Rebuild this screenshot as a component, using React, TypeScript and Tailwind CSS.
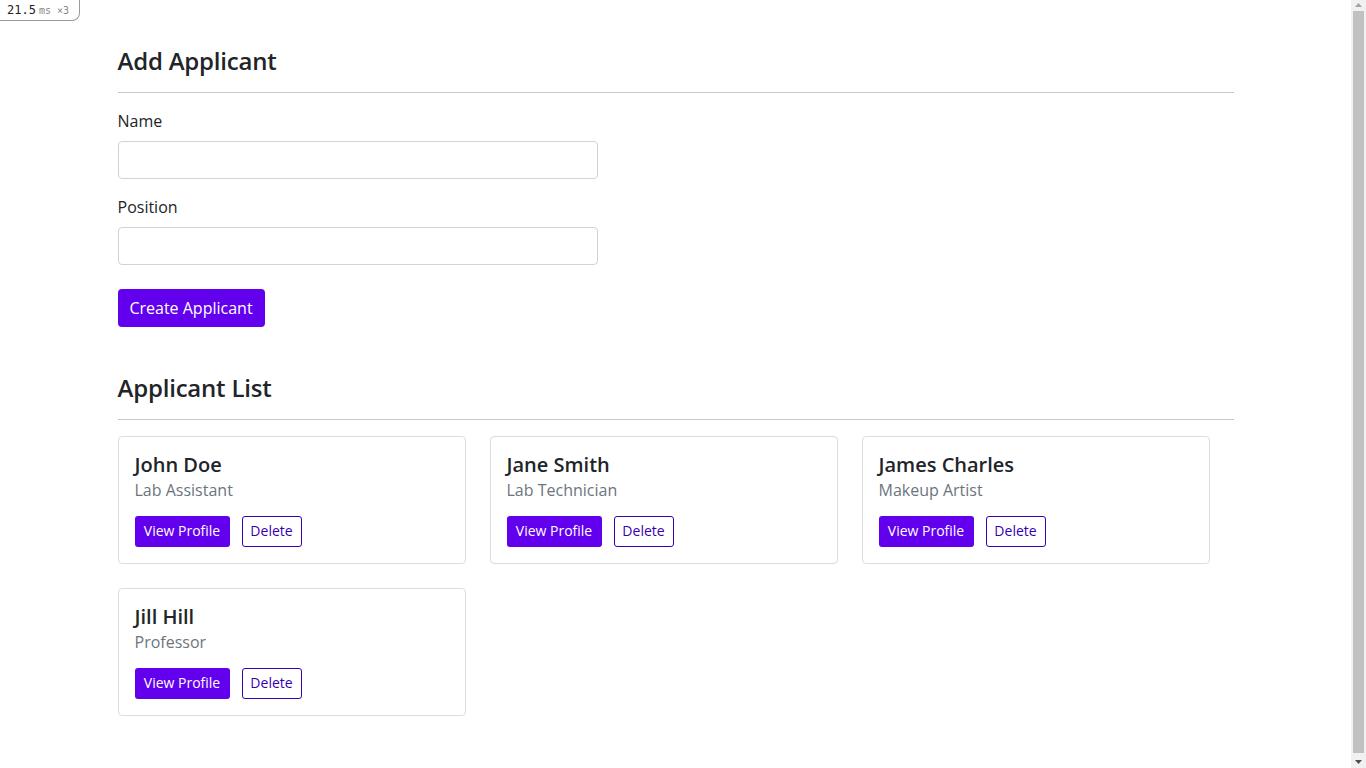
import React from "react";

const applicants = [
  { name: "John Doe", position: "Lab Assistant" },
  { name: "Jane Smith", position: "Lab Technician" },
  { name: "James Charles", position: "Makeup Artist" },
  { name: "Jill Hill", position: "Professor" },
];

function Card({ name, position }: { name: string; position: string }) {
  return (
    <div className="w-[348px] h-[128px] border border-[#dcdcdc] rounded-[4px] px-4 pt-[16px] bg-white">
      <div className="text-[20px] leading-[24px] font-semibold text-[#212529]">{name}</div>
      <div className="text-[16px] leading-[24px] text-[#6c757d] mt-[1px]">{position}</div>
      <div className="flex gap-3 mt-[14px]">
        <button className="h-[31px] w-[95px] pb-[2px] rounded-[3px] bg-[#6200ee] text-white text-[14px] leading-[20px]">View Profile</button>
        <button className="h-[31px] w-[60px] pb-[2px] rounded-[3px] border border-[#3700b3] text-[#3700b3] text-[14px] leading-[20px] bg-white">Delete</button>
      </div>
    </div>
  );
}

export default function App() {
  return (
    <div className="relative flex h-[768px] overflow-hidden bg-white text-[#212529]" style={{ fontFamily: '"Open Sans", "Noto Sans", sans-serif' }}>
      <div className="absolute left-0 top-0 h-[21px] w-[80px] border-r border-b border-[#9a9a9a] rounded-br-[8px] bg-white flex items-center pl-[7px] text-[12px] text-[#222]" style={{ fontFamily: '"DejaVu Sans Mono", monospace' }}>
        <span>21.5</span>
        <span className="text-[10px] text-[#888] ml-[3px]">ms</span>
        <span className="text-[10px] text-[#888] ml-[6px]">×3</span>
      </div>
      <main className="flex-1 min-w-0">
        <div className="mx-auto w-[1116px] pt-[46px]">
          <h4 className="text-[24px] leading-[29px] font-semibold tracking-[-0.2px]">Add Applicant</h4>
          <hr className="mt-[17px] border-0 border-t border-[#c8c9ca]" />
          <div className="mt-[16px]">
            <label className="block text-[16px] leading-[24px]">Name</label>
            <input className="mt-[8px] block w-[480px] h-[38px] border border-[#ced4da] rounded-[4px] px-3" />
          </div>
          <div className="mt-[16px]">
            <label className="block text-[16px] leading-[24px]">Position</label>
            <input className="mt-[8px] block w-[480px] h-[38px] border border-[#ced4da] rounded-[4px] px-3" />
          </div>
          <button className="mt-[24px] h-[38px] w-[147px] pb-[1px] rounded-[4px] bg-[#6200ee] text-white text-[16px]">Create Applicant</button>
          <h4 className="mt-[46px] text-[24px] leading-[29px] font-semibold tracking-[-0.2px]">Applicant List</h4>
          <hr className="mt-[17px] border-0 border-t border-[#c8c9ca]" />
          <div className="mt-[16px] grid grid-cols-[348px_348px_348px] gap-x-6 gap-y-[24px]">
            {applicants.map((a) => (
              <Card key={a.name} {...a} />
            ))}
          </div>
        </div>
      </main>
      <aside className="w-[15px] h-full bg-[#f1f1f1] flex flex-col items-center">
        <svg width="15" height="10" viewBox="0 0 15 10" className="shrink-0">
          <polygon points="4,7 11,7 7.5,3" fill="#a3a3a3" />
        </svg>
        <div className="flex-1 w-[11px] bg-[#c1c1c1] my-[1px]" />
        <svg width="15" height="14" viewBox="0 0 15 14" className="shrink-0">
          <polygon points="4,6 11,6 7.5,10" fill="#505050" />
        </svg>
      </aside>
    </div>
  );
}
